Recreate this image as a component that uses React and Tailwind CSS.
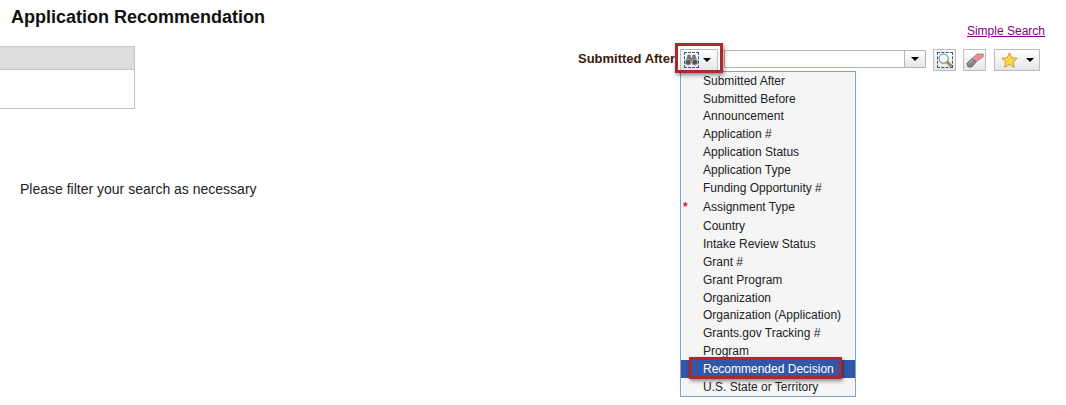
import React from 'react';

const items = [
  ['Submitted After', 'h-[18px]'],
  ['Submitted Before', 'h-[18px]'],
  ['Announcement', 'h-[17px] pb-[1px]'],
  ['Application #', 'h-[18px]'],
  ['Application Status', 'h-[18px]'],
  ['Application Type', 'h-[18px]'],
  ['Funding Opportunity #', 'h-[18px]'],
  ['Assignment Type', 'h-[20px]'],
  ['Country', 'h-[18px]'],
  ['Intake Review Status', 'h-[18px]'],
  ['Grant #', 'h-[18px]'],
  ['Grant Program', 'h-[18px]'],
  ['Organization', 'h-[18px]'],
  ['Organization (Application)', 'h-[17px] pb-[1px]'],
  ['Grants.gov Tracking #', 'h-[18px]'],
  ['Program', 'h-[18px]'],
  ['Recommended Decision', 'h-[18px]'],
  ['U.S. State or Territory', 'h-[18px]'],
];

const Caret = () => (
  <span className="w-0 h-0 border-x-[4px] border-x-transparent border-t-[4px] border-t-black" />
);

const Binoculars = () => (
  <svg width="13" height="12" viewBox="0 0 13 12">
    <path d="M3 1 L5.2 1 L5.6 4 L7.4 4 L7.8 1 L10 1 L11.5 6 L6.5 7 L1.5 6 Z" fill="#7a7a7a" stroke="#5a5a5a" strokeWidth="0.5" />
    <circle cx="3.2" cy="8.2" r="2.9" fill="#555" stroke="#a8a8a8" strokeWidth="1" />
    <circle cx="9.8" cy="8.2" r="2.9" fill="#555" stroke="#a8a8a8" strokeWidth="1" />
  </svg>
);

const Magnifier = () => (
  <svg width="14" height="14" viewBox="0 0 14 14">
    <line x1="8.8" y1="8.8" x2="12.6" y2="12.6" stroke="#a98248" strokeWidth="2.8" strokeLinecap="round" />
    <circle cx="5.6" cy="5.6" r="4.6" fill="#f4f8fb" stroke="#75858f" strokeWidth="1.1" />
  </svg>
);

const Eraser = () => (
  <svg width="18" height="15" viewBox="0 0 18 15">
    <path d="M0.7 10.5 L6 5.5 L10.5 8.5 L6 14 L2 14 Z" fill="#85858f" stroke="#5c5c66" strokeWidth="0.7" />
    <path d="M6 5.5 L11 1 L17.3 1 L17 4 L10.5 8.5 Z" fill="#e98f94" stroke="#a9666c" strokeWidth="0.7" />
    <path d="M3 10.5 L6.5 7" stroke="#c9c9d2" strokeWidth="1" />
  </svg>
);

const Star = () => (
  <svg width="17" height="16" viewBox="0 0 17 16">
    <path d="M8.5 0.8 L10.8 5.7 L16.2 6.3 L12.2 10 L13.3 15.3 L8.5 12.6 L3.7 15.3 L4.8 10 L0.8 6.3 L6.2 5.7 Z" fill="#f6d84a" stroke="#b8973a" strokeWidth="0.9" />
  </svg>
);

const btn = 'flex items-center h-[22px] border border-[#bdbdbd] bg-gradient-to-b from-white to-[#e6e6e6]';

const App = () => {
  return (
    <div className="relative w-[1066px] h-[405px] overflow-hidden bg-white font-['Liberation_Sans',Arial,sans-serif]">
      <div className="flex justify-between">
        <div>
          <h1 className="pl-[11px] pt-[7px] h-[46px] text-[18px] leading-[20px] font-bold text-[#111]">Application Recommendation</h1>
          <div className="w-[135px] border border-l-0 border-[#c4c4c4]">
            <div className="h-[23px] bg-[#dddddd] border-b border-[#c4c4c4]" />
            <div className="h-[38px]" />
          </div>
          <p className="pl-[20px] pt-[71px] text-[14px] leading-[18px] text-[#222] whitespace-nowrap">Please filter your search as necessary</p>
        </div>

        <div className="flex flex-col items-end pr-[21px] pt-[24px]">
          <a className="text-[12px] leading-[14px] text-[#800080] underline">Simple Search</a>
          <div className="flex items-start mt-[11px] mr-[5px]">
            <span className="text-[13px] leading-[16px] mt-[2px] font-bold text-[#3a1a0a] mr-[5px]">Submitted After</span>
            <div className={`${btn} w-[38px] pl-[3px] gap-[4px]`}>
              <span className="flex items-center justify-center w-[15px] h-[16px] border border-dashed border-[#1f5f9f]">
                <Binoculars />
              </span>
              <Caret />
            </div>
            <div className="flex ml-[6px] mt-[1px] w-[202px] h-[18px] border border-[#b5b5b5] bg-white">
              <div className="flex-1" />
              <div className="flex items-center justify-center w-[21px] border-l border-[#b5b5b5] bg-gradient-to-b from-white to-[#e6e6e6]">
                <Caret />
              </div>
            </div>
            <div className={`${btn} w-[23px] ml-[7px] justify-center`}>
              <span className="flex items-center justify-center w-[16px] h-[16px] border border-dashed border-[#1f5f9f]">
                <Magnifier />
              </span>
            </div>
            <div className={`${btn} w-[23px] ml-[7px] justify-center`}>
              <Eraser />
            </div>
            <div className={`${btn} w-[46px] ml-[8px] pl-[6px] gap-[8px]`}>
              <Star />
              <Caret />
            </div>
          </div>
        </div>
      </div>

      {/* dropdown menu */}
      <ul className="absolute left-[680px] top-[71px] w-[176px] h-[326px] border border-[#7ba6cc] bg-[#f5f5f5] text-[12px] text-[#222]">
        {items.map(([label, h]) => (
          <li
            key={label}
            className={`relative flex items-center pl-[22px] whitespace-nowrap ${h} ${label === 'Recommended Decision' ? 'bg-[#3357a8] text-white' : ''}`}
          >
            {label === 'Assignment Type' && (
              <span className="absolute left-[2px] top-[1px] text-[#e0102a] text-[12px] font-bold">*</span>
            )}
            {label}
          </li>
        ))}
      </ul>

      {/* red callouts */}
      <div className="absolute left-[675px] top-[43px] w-[48px] h-[30px] border-[3px] border-[#b0282f] shadow-[1px_2px_4px_rgba(0,0,0,0.45)]" />
      <div className="absolute left-[689px] top-[357px] w-[153px] h-[22px] border-[3px] border-[#b0282f] shadow-[1px_2px_4px_rgba(0,0,0,0.45)]" />
    </div>
  );
};

export default App;
